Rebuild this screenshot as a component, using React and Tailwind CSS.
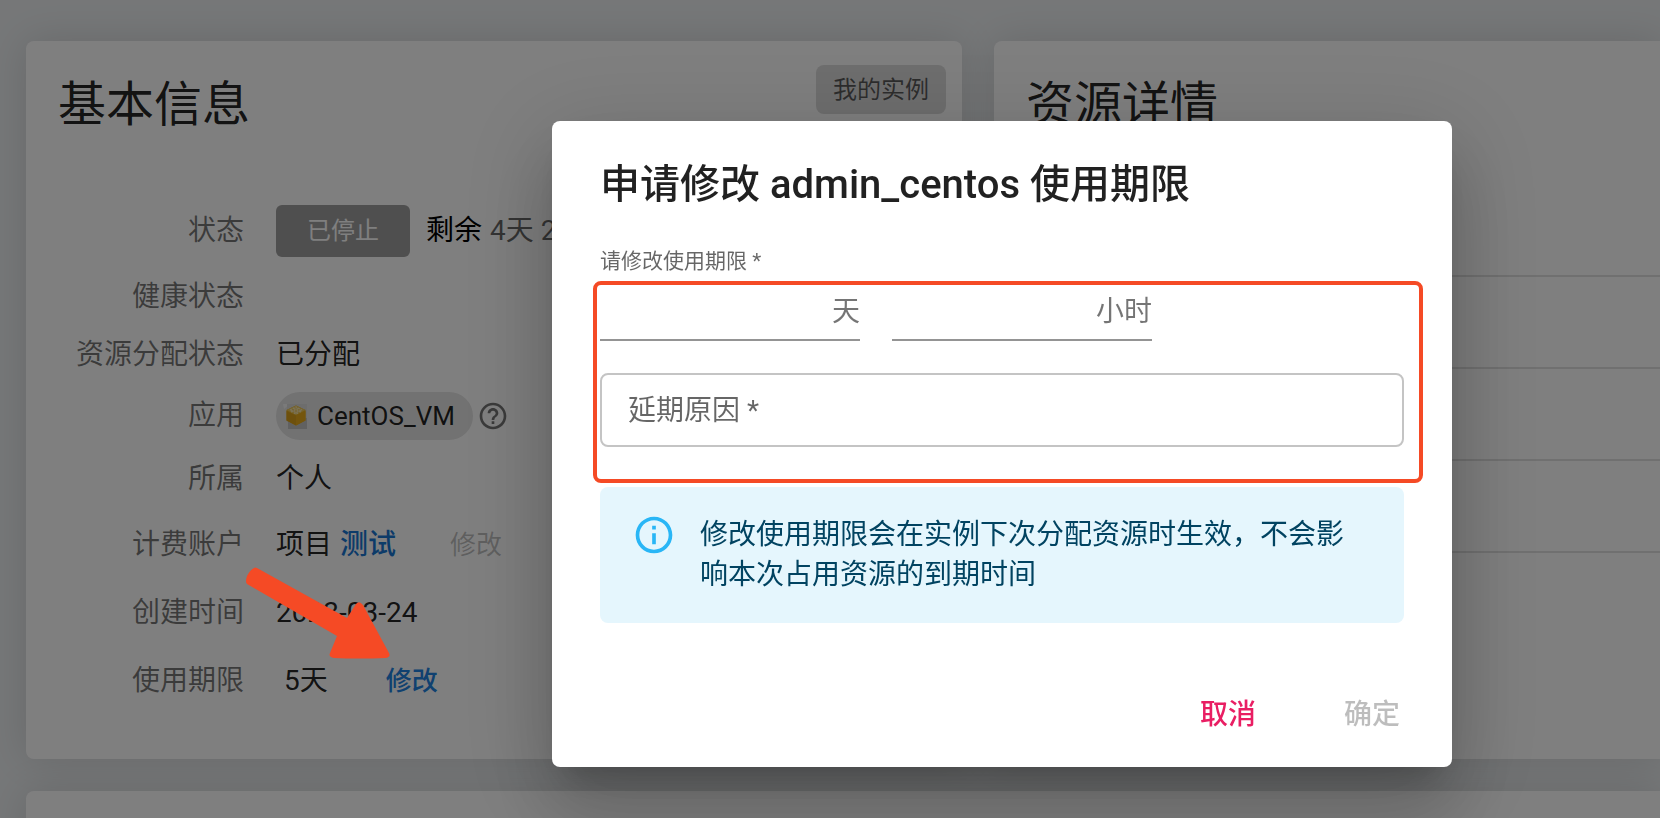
import React, { useState } from 'react';
import { MdHelpOutline, MdInfoOutline } from 'react-icons/md';

const Card = ({ className = '', children }) => (
    <section className={`bg-white shadow-[0_0_40px_rgba(0,0,0,0.12)] ${className}`}>
        {children}
    </section>
);

const CubeIcon = () => (
    <svg viewBox="0 0 26 26" className="size-[26px] shrink-0" aria-hidden="true">
        <path d="M0 1h5v2L1 6z" fill="#f4f4f4" />
        <path d="M4 1h20v18H4z" fill="#dadada" />
        <path d="M5 15h19v11H5z" fill="#c2c2c2" />
        <path d="M3.500 7 13 2.500 22.500 7v10.500L13 22.500l-9.500-5z" fill="#e8b020" />
        <path d="M3.500 8 13 12.500v10l-9.500-5z" fill="#dba01a" />
        <path d="M22.500 8 13 12.500v10l9.500-5z" fill="#e8ab1a" />
        <path d="M3.500 7 13 2.500 22.500 7 13 12z" fill="#edc85c" />
        <path d="m7 7 6-3 6 3M8 9l8-4M18 9l-8-4M11 10.500l8-4M15 10.500l-8-4" fill="none" stroke="#f6e6b4" strokeWidth="1.200" strokeDasharray="2 1" />
    </svg>
);

const Row = ({ label, className, children }) => (
    <div className={`flex items-center text-[28px] leading-10 ${className}`}>
        <dt className="w-[218px] shrink-0 pr-8 text-right text-black/54">{label}</dt>
        <dd className="flex items-center whitespace-nowrap text-black/87">{children}</dd>
    </div>
);

const BasicInfo = () => (
    <Card className="h-[718px] min-w-0 rounded-lg">
        <div className="flex items-start justify-between pl-8 pr-4 pt-6">
            <h2 className="pt-1 text-[48px] leading-[72px] text-black/87">基本信息</h2>
            <button type="button" className="h-[49px] rounded-lg bg-[#dcdcdc] px-[17px] text-[24px] text-black/60">
                我的实例
            </button>
        </div>
        <dl className="pl-8 pt-[54px]">
            <Row label="状态" className="h-[72px]">
                <button type="button" disabled className="mr-4 h-[52px] w-[134px] rounded-md bg-[#9e9e9e] text-[24px] text-white">
                    已停止
                </button>
                <span className="text-black">剩余</span>
                <span className="ml-2 text-black/60">4天 2</span>
            </Row>
            <Row label="健康状态" className="h-[60px]" />
            <Row label="资源分配状态" className="h-14">已分配</Row>
            <Row label="应用" className="h-[66px]">
                <span className="flex h-12 items-center gap-2 rounded-full bg-[#e4e4e4] pl-[7px] pr-[18px] text-[26px]">
                    <CubeIcon />
                    CentOS_VM
                </span>
                <MdHelpOutline size={32} className="ml-1 text-black/54" />
            </Row>
            <Row label="所属" className="h-[60px]">个人</Row>
            <Row label="计费账户" className="h-[72px]">
                项目
                <a href="#project" className="ml-2 font-medium text-[#1976d2]">测试</a>
                <button type="button" disabled className="ml-[54px] text-[26px] text-black/26">修改</button>
            </Row>
            <Row label="创建时间" className="h-16">2023-03-24</Row>
            <Row label="使用期限" className="h-[72px]">
                <span className="ml-2">5天</span>
                <button type="button" className="ml-[58px] text-[26px] font-medium text-[#2182e0]">修改</button>
            </Row>
        </dl>
    </Card>
);

const ResourceDetail = () => (
    <Card className="h-[718px] min-w-0 rounded-l-lg">
        <h2 className="pl-8 pt-7 text-[48px] leading-[72px] text-black/87">资源详情</h2>
        <ul className="pt-11">
            {[0, 1, 2, 3].map((i) => (
                <li key={i} className="h-[92px] border-b-2 border-black/12" />
            ))}
        </ul>
    </Card>
);

const DurationInput = ({ unit, value, onChange }) => (
    <label className="flex h-14 w-[260px] items-center border-b-2 border-[#949494] text-[28px] text-black/54">
        <input
            type="text"
            aria-label={unit}
            value={value}
            onChange={(e) => onChange(e.target.value)}
            className="min-w-0 flex-1 bg-transparent text-black/87 outline-none"
        />
        <span>{unit}</span>
    </label>
);

const ExtendDialog = () => {
    const [days, setDays] = useState('');
    const [hours, setHours] = useState('');
    const [reason, setReason] = useState('');

    return (
        <form
            role="dialog"
            aria-labelledby="dialog-title"
            onSubmit={(e) => e.preventDefault()}
            className="w-[900px] rounded-lg bg-white px-12 pb-4 pt-8 shadow-[0_22px_30px_-14px_rgba(0,0,0,0.2),0_48px_76px_6px_rgba(0,0,0,0.14),0_18px_92px_16px_rgba(0,0,0,0.12)]"
        >
            <h2 id="dialog-title" className="text-[40px] font-medium leading-[64px] text-black/87">
                申请修改 admin_centos 使用期限
            </h2>
            <fieldset className="relative mt-8">
                <legend className="text-[21px] leading-6 text-black/60">请修改使用期限 *</legend>
                <div className="flex gap-8 pt-3">
                    <DurationInput unit="天" value={days} onChange={setDays} />
                    <DurationInput unit="小时" value={hours} onChange={setHours} />
                </div>
                <input
                    type="text"
                    required
                    aria-label="延期原因"
                    placeholder="延期原因 *"
                    value={reason}
                    onChange={(e) => setReason(e.target.value)}
                    className="mt-8 h-[74px] w-full rounded-lg border-2 border-[#c4c4c4] px-[26px] text-[28px] text-black/87 outline-none placeholder:text-black/60"
                />
                {/* highlight around the fields to fill in */}
                <div className="pointer-events-none absolute -bottom-9 -left-[7px] -right-[19px] top-2 rounded-lg border-4 border-[#f54a25]" />
            </fieldset>
            <div role="alert" className="mt-10 flex gap-6 rounded-lg bg-[#e5f6fd] py-7 pl-8 pr-10 text-[28px] leading-10 text-[#014361]">
                <MdInfoOutline size={44} className="-mt-0.5 shrink-0 text-[#29b6f6]" />
                <p>修改使用期限会在实例下次分配资源时生效，不会影响本次占用资源的到期时间</p>
            </div>
            <div className="mt-14 flex justify-end gap-14 pr-1 text-[28px] font-medium">
                <button type="button" className="h-[72px] px-8 text-[#e91e63]">取消</button>
                <button type="submit" disabled className="h-[72px] text-black/26">确定</button>
            </div>
        </form>
    );
};

const Arrow = () => (
    <svg viewBox="0 0 144 92" className="w-[144px]" aria-hidden="true">
        <path
            d="M8 1Q9 0 11 1L101 51 110 37Q113 33 117 38L143 86Q145 90 140 91Q112 92 88 91Q82 90 84 86L91 69 1 17Q-1 15 1 9Q4 3 8 1z"
            fill="#f54a25"
        />
    </svg>
);

const App = () => (
    <div className="relative min-h-screen overflow-hidden bg-[#eceff1] font-['Roboto','Noto_Sans_CJK_SC',sans-serif]">
        <main className="flex h-screen flex-col gap-8 overflow-hidden pl-[26px] pt-[41px]">
            <div className="grid shrink-0 grid-cols-[936fr_666fr] gap-8">
                <BasicInfo />
                <ResourceDetail />
            </div>
            <Card className="h-40 shrink-0 rounded-tl-lg" />
        </main>
        <div className="fixed inset-0 flex items-start justify-center overflow-hidden bg-black/50 pl-[344px] pt-[121px]">
            <ExtendDialog />
        </div>
        {/* arrow pointing at the edit button */}
        <div className="pointer-events-none absolute left-[246px] top-[567px]">
            <Arrow />
        </div>
    </div>
);

export default App;
